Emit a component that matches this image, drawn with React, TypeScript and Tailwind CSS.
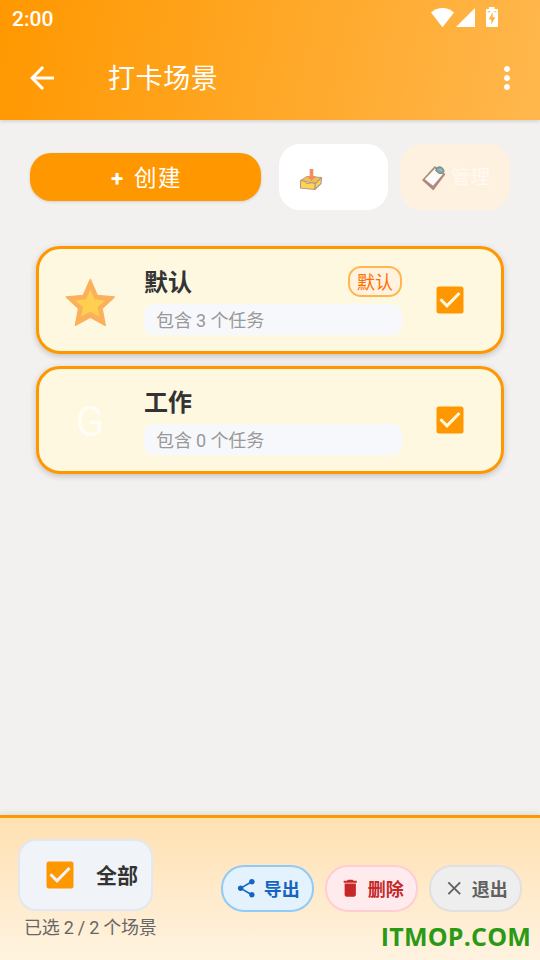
import React from "react";
import { MdArrowBack, MdClose, MdDelete, MdMoreVert, MdShare } from "react-icons/md";

function StatusIcons() {
  return (
    <svg width="70" height="22" viewBox="0 0 70 22" fill="#fff">
      <path d="M1 5.600C4 3 8 1 12.500 1S21 3 24 5.600L12.500 20.200z" />
      <path d="M45 1v19H26z" />
      <path
        fillRule="evenodd"
        d="M59 0h5.500v2H67a1 1 0 0 1 1 1v16a1 1 0 0 1-1 1H57a1 1 0 0 1-1-1V3a1 1 0 0 1 1-1h2zM62.500 5.500L58.700 12.500H61.300V17.500L65.300 10.300H62.700V5.500zM57.700 4.300v1h2.500v-1zM64.300 4.300v1h2v-1z"
      />
    </svg>
  );
}

function Checkbox({ tick }: { tick: string }) {
  return (
    <svg width="28" height="28" viewBox="0 0 28 28" className="shrink-0">
      <rect x="0.500" y="0.500" width="27" height="27" rx="2.500" fill="#ff9800" />
      <path d="M4.500 13.300L11 19.800L23.500 7" fill="none" stroke={tick} strokeWidth="3" />
    </svg>
  );
}

function Star() {
  return (
    <svg width="52" height="50" viewBox="0 0 52 50">
      <path
        d="M26.300 2.500L33.300 18.600L50.300 20L38 31.500L41.200 48.300L26.300 40L11.400 48.300L14.600 31.500L2.300 20L19.300 18.600z"
        fill="#fbb05b"
        stroke="#fbb05b"
        strokeWidth="1.500"
        strokeLinejoin="round"
      />
      <path
        d="M26.300 12.500L30.500 22.200L41.300 23.700L33.500 30L35.400 39.500L26.300 34.800L17.200 39.500L19.100 30L11.300 23.700L22.100 22.200z"
        fill="#ffd04f"
      />
    </svg>
  );
}

function InboxTray() {
  return (
    <svg width="24" height="24" viewBox="0 0 24 24" strokeLinejoin="round">
      <path d="M1.500 12.500L8 8.500L22.500 9.500L16.500 15.500z" fill="#edc44f" stroke="#b9958a" strokeWidth="1" />
      <path d="M1.500 12.500L6 13.200Q7 17 12.500 14.600L16.500 15.500L15.800 21.500L1.500 20z" fill="#fbd650" stroke="#b9958a" strokeWidth="1.100" />
      <path d="M16.500 15.500L22.500 9.500L22 15.500L15.800 21.500z" fill="#fbd650" stroke="#b9958a" strokeWidth="1.100" />
      <path d="M10.700 1h3.600v7h2.900l-4.700 5-4.700-5h2.900z" fill="#f58b62" />
    </svg>
  );
}

function Clipboard() {
  return (
    <svg width="26" height="26" viewBox="0 0 26 26" strokeLinejoin="round">
      <path d="M14 2.200L23.300 9.300L12.200 24.200L2.200 15z" fill="#ae897c" stroke="#ae897c" strokeWidth="1.800" />
      <path d="M14 3.500L21.800 9.300L12 20.700L3.800 14.200z" fill="#fdfcfb" />
      <path d="M14.500 5.500L16.500 2.300Q19.300.800 21.500 3L23.200 6.200L21 8.500Q17.500 9.300 14.500 5.500z" fill="#83aaa8" stroke="#6d8585" strokeWidth="1" />
      <path d="M18 4.500l3 1" stroke="#adcbc7" strokeWidth="1" />
    </svg>
  );
}

type SceneProps = { name: string; count: number; icon: React.ReactNode; isDefault?: boolean };

function SceneCard({ name, count, icon, isDefault }: SceneProps) {
  return (
    <div className="flex h-[108px] items-center rounded-[24px] border-3 border-[#ff9800] bg-[#fff8e1] shadow-[0_2px_6px_rgba(0,0,0,0.2)]">
      <div className="flex w-[102px] shrink-0 justify-center pt-[3px]">{icon}</div>
      <div className="ml-[3px] w-[258px] shrink-0">
        <div className="flex h-[34px] items-center justify-between">
          <h2 className="pt-[2px] text-[24px] leading-[34px] font-bold text-[#333]">{name}</h2>
          {isDefault && (
            <span className="mb-px flex h-[31px] w-[54px] items-center justify-center rounded-[13px] border-2 border-[#ffb74d] bg-[#fff3e0] pt-[2px] text-[18px] leading-none text-[#ff6f00]">
              默认
            </span>
          )}
        </div>
        <p className="mt-[5px] h-[31px] rounded-[9px] bg-[#f7f8fb] px-3 text-[18px] leading-[33px] tracking-[-0.12px] text-[#999]">
          包含 {count} 个任务
        </p>
      </div>
      <div className="ml-[34px]">
        <Checkbox tick="#fff8e1" />
      </div>
    </div>
  );
}

export default function App() {
  return (
    <div className="flex h-[960px] w-[540px] flex-col overflow-hidden bg-[#f3f1ef] font-[Roboto,'Noto_Sans_CJK_SC',sans-serif]">
      <header className="h-[120px] shrink-0 bg-[linear-gradient(102.5deg,#ff9800,#ffa726_50%,#ffb74d)] text-white shadow-[0_1px_4px_rgba(0,0,0,0.16)]">
        <div className="flex h-9 items-start justify-between pr-10 pl-3">
          <span className="pt-[8px] text-[21px] leading-[22px] font-medium">2:00</span>
          <div className="pt-[7px]">
            <StatusIcons />
          </div>
        </div>
        <div className="flex h-[84px] items-center pr-[15px] pl-6">
          <MdArrowBack size={36} />
          <h1 className="ml-12 flex-1 pt-[2px] text-[27px] leading-[36px] font-normal tracking-[0.6px]">打卡场景</h1>
          <MdMoreVert size={36} />
        </div>
      </header>

      <main className="flex-1">
        <div className="flex items-center pt-6 pl-[30px]">
          <button className="flex h-12 w-[231px] items-center justify-center rounded-[21px] bg-[#ff9800] pt-[2px] pl-[2px] text-[22.5px] leading-none tracking-[1.5px] text-white shadow-[0_1px_3px_rgba(0,0,0,0.14)]">
            <span className="mr-[9px] font-bold">+</span>
            <span>创建</span>
          </button>
          <button className="ml-[18px] flex h-[66px] w-[109px] items-center rounded-[21px] bg-white pt-[5px] pl-[20px]">
            <InboxTray />
          </button>
          <button className="ml-3 flex h-[66px] w-[110px] items-center rounded-[21px] bg-[#fff1df] pt-[2px] pl-[21px] text-[19.5px] text-[#fff9f2]">
            <Clipboard />
            <span className="ml-1">管理</span>
          </button>
        </div>
        <section className="mt-9 flex flex-col gap-3 px-9">
          <SceneCard name="默认" count={3} icon={<Star />} isDefault />
          <SceneCard
            name="工作"
            count={0}
            icon={<span className="pt-px text-[42px] leading-none text-[#fffdf5]">G</span>}
          />
        </section>
      </main>

      <footer className="relative flex h-[145px] shrink-0 border-t-3 border-[#ff9800] bg-[linear-gradient(#ffe0b2,#fff3e0)] pl-[18px] shadow-[0_-2px_6px_rgba(0,0,0,0.08)]">
        <div className="w-[203px] shrink-0 pt-[21px]">
          <label className="flex h-[72px] w-[135px] items-center rounded-[18px] border-2 border-[#e1e8f0] bg-[#f0f3f8] pl-[26px] text-[21px] font-bold text-[#333]">
            <Checkbox tick="#f0f3f8" />
            <span className="ml-[22px] pt-[3px] whitespace-nowrap">全部</span>
          </label>
          <p className="mt-[3px] pl-[6px] text-[18px] leading-[27px] tracking-[-0.25px] text-[#666]">已选 2 / 2 个场景</p>
        </div>
        <div className="flex gap-[11px] pt-[47px] text-[18px] leading-none font-bold">
          <button className="flex h-[47px] w-[93px] items-center justify-center gap-1.5 rounded-[23px] border-2 border-[#90caf9] bg-[#e3f2fd] text-[#1565c0]">
            <MdShare size={22.5} />
            <span className="pt-[2px]">导出</span>
          </button>
          <button className="flex h-[47px] w-[93px] items-center justify-center gap-1.5 rounded-[23px] border-2 border-[#ffcdd2] bg-[#ffebee] text-[#c62828]">
            <MdDelete size={22.5} />
            <span className="pt-[2px]">删除</span>
          </button>
          <button className="flex h-[47px] w-[93px] items-center justify-center gap-1.5 rounded-[23px] border-2 border-[#e0e0e0] bg-[#eee] text-[#616161]">
            <MdClose size={22.5} />
            <span className="pt-[2px]">退出</span>
          </button>
        </div>
        <span className="absolute right-[9px] bottom-[11px] font-['Open_Sans',sans-serif] text-[25px] leading-[26px] font-bold tracking-[0.2px] text-[#2a9a16]">
          ITMOP.COM
        </span>
      </footer>
    </div>
  );
}
